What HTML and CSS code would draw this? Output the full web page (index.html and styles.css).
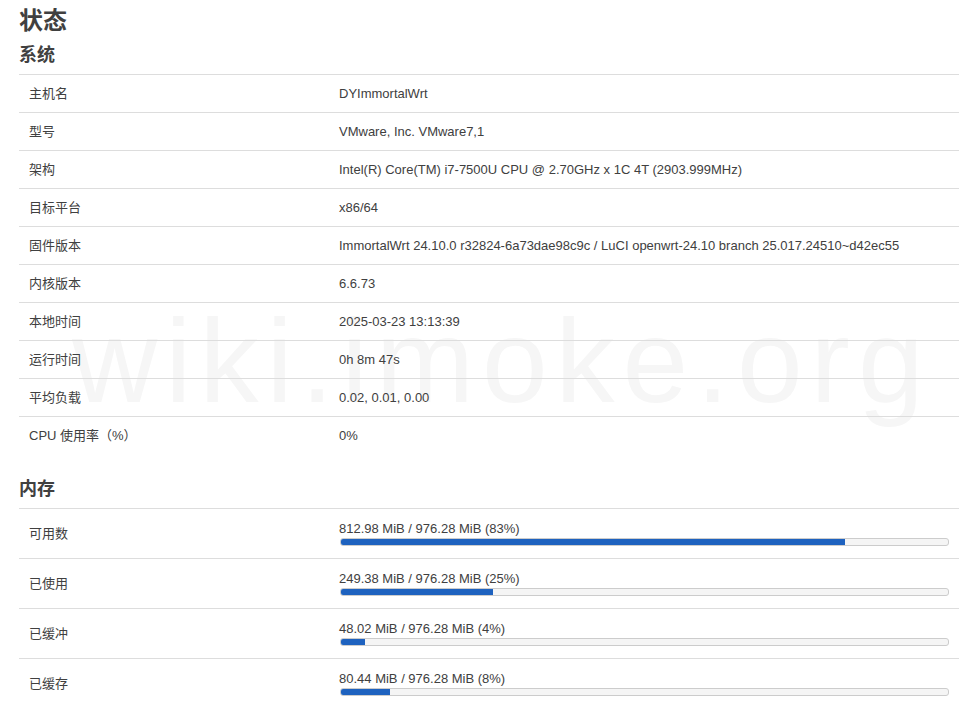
FILE: index.html
```html
<!DOCTYPE html>
<html lang="zh-CN">
<head>
<meta charset="utf-8">
<title>状态</title>
<link rel="stylesheet" href="styles.css">
</head>
<body>
<div class="watermark" aria-hidden="true">wiki.imoke.org</div>
<main class="page">
  <h2 class="page-title">状态</h2>

  <section class="section">
    <h3 class="section-title">系统</h3>
    <div class="table">
      <div class="row"><div class="cell label">主机名</div><div class="cell value">DYImmortalWrt</div></div>
      <div class="row"><div class="cell label">型号</div><div class="cell value">VMware, Inc. VMware7,1</div></div>
      <div class="row"><div class="cell label">架构</div><div class="cell value">Intel(R) Core(TM) i7-7500U CPU @ 2.70GHz x 1C 4T (2903.999MHz)</div></div>
      <div class="row"><div class="cell label">目标平台</div><div class="cell value">x86/64</div></div>
      <div class="row"><div class="cell label">固件版本</div><div class="cell value">ImmortalWrt 24.10.0 r32824-6a73dae98c9c / LuCI openwrt-24.10 branch 25.017.24510~d42ec55</div></div>
      <div class="row"><div class="cell label">内核版本</div><div class="cell value">6.6.73</div></div>
      <div class="row"><div class="cell label">本地时间</div><div class="cell value">2025-03-23 13:13:39</div></div>
      <div class="row"><div class="cell label">运行时间</div><div class="cell value">0h 8m 47s</div></div>
      <div class="row"><div class="cell label">平均负载</div><div class="cell value">0.02, 0.01, 0.00</div></div>
      <div class="row"><div class="cell label">CPU 使用率（%）</div><div class="cell value">0%</div></div>
    </div>
  </section>

  <section class="section section-mem">
    <h3 class="section-title">内存</h3>
    <div class="table">
      <div class="row row-bar">
        <div class="cell label">可用数</div>
        <div class="cell value">
          <div class="bar-text">812.98 MiB / 976.28 MiB (83%)</div>
          <div class="bar"><div class="bar-fill" style="width:83%"></div></div>
        </div>
      </div>
      <div class="row row-bar">
        <div class="cell label">已使用</div>
        <div class="cell value">
          <div class="bar-text">249.38 MiB / 976.28 MiB (25%)</div>
          <div class="bar"><div class="bar-fill" style="width:25%"></div></div>
        </div>
      </div>
      <div class="row row-bar">
        <div class="cell label">已缓冲</div>
        <div class="cell value">
          <div class="bar-text">48.02 MiB / 976.28 MiB (4%)</div>
          <div class="bar"><div class="bar-fill" style="width:4%"></div></div>
        </div>
      </div>
      <div class="row row-bar">
        <div class="cell label">已缓存</div>
        <div class="cell value">
          <div class="bar-text">80.44 MiB / 976.28 MiB (8%)</div>
          <div class="bar"><div class="bar-fill" style="width:8%"></div></div>
        </div>
      </div>
    </div>
  </section>
</main>
</body>
</html>
```

FILE: styles.css
```css
html, body {
  margin: 0;
  padding: 0;
  background: #ffffff;
}

body {
  font-family: "Liberation Sans", Arial, "Noto Sans CJK SC", sans-serif;
  font-size: 13px;
  color: #404040;
  position: relative;
  overflow: hidden;
  height: 717px;
}

.watermark {
  position: absolute;
  left: 72px;
  top: 302px;
  font-family: "Liberation Sans", Arial, sans-serif;
  font-size: 118px;
  line-height: 1;
  letter-spacing: 8px;
  color: #f6f6f6;
  white-space: nowrap;
  z-index: 0;
  user-select: none;
  pointer-events: none;
}

.page {
  position: relative;
  z-index: 1;
  margin: 0 9px 0 19px;
  padding-top: 3px;
}

.page-title {
  margin: 0;
  font-size: 24px;
  line-height: 36px;
  font-weight: bold;
  color: #404040;
}

.section-title {
  margin: 3px 0 6px;
  font-size: 18px;
  line-height: 26px;
  font-weight: bold;
  color: #404040;
}

.section-mem {
  margin-top: 22px;
}

.table {
  display: flex;
  flex-direction: column;
}

.row {
  display: grid;
  grid-template-columns: 310px 1fr;
  align-items: center;
  height: 38px;
  box-sizing: border-box;
  border-top: 1px solid #dddddd;
}

.row-bar {
  height: 50px;
}

.cell {
  padding: 0 10px;
  line-height: 16px;
  white-space: nowrap;
}

.bar-text {
  line-height: 16px;
}

.bar {
  margin-top: 1px;
  margin-left: 1px;
  height: 8px;
  box-sizing: border-box;
  border: 1px solid #cccccc;
  border-radius: 3px;
  background: #f5f5f5;
  overflow: hidden;
}

.bar-fill {
  height: 100%;
  background: #1e62bf;
}
```
